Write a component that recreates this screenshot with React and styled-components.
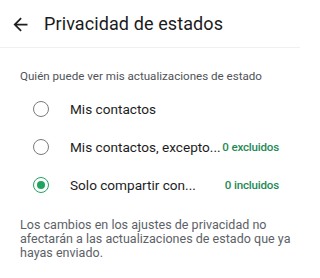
import React, { useState } from 'react';
import styled, { createGlobalStyle } from 'styled-components';

const GlobalStyle = createGlobalStyle`
  html, body {
    margin: 0;
    padding: 0;
    background: #ffffff;
  }
  body {
    font-family: Roboto, "Noto Sans", "Liberation Sans", sans-serif;
    -webkit-font-smoothing: antialiased;
  }
`;

const Screen = styled.div`
  width: 300px;
  height: 278px;
  background: #fff;
  overflow: hidden;
`;

const Header = styled.header`
  display: flex;
  align-items: center;
  height: 48px;
  padding: 0 0 0 10px;
  border-bottom: 1px solid #f0f0f0;
  box-sizing: border-box;
`;

const BackButton = styled.button`
  display: flex;
  align-items: center;
  justify-content: center;
  width: 21px;
  height: 21px;
  padding: 0;
  margin: 2px 13px 0 0;
  border: none;
  background: none;
  color: #1f1f1f;
  cursor: pointer;
`;

const Title = styled.h1`
  margin: 0;
  font-size: 18px;
  font-weight: 400;
  color: #1b1b1b;
  letter-spacing: 0.1px;
`;

const SectionLabel = styled.div`
  padding: 20px 20px 0;
  font-size: 11.6px;
  color: #4f5358;
  line-height: 16px;
`;

const Options = styled.div`
  display: flex;
  flex-direction: column;
  padding-top: 6px;
`;

const Row = styled.label`
  display: flex;
  align-items: center;
  height: 38px;
  padding: 0 21px 0 33px;
  cursor: pointer;
`;

const Radio = styled.span`
  position: relative;
  width: 16px;
  height: 16px;
  box-sizing: border-box;
  border-radius: 50%;
  border: 1.7px solid ${p => (p.$checked ? '#1fa45f' : '#7a7a7a')};
  margin-right: 21px;
  flex-shrink: 0;

  &::after {
    content: '';
    display: ${p => (p.$checked ? 'block' : 'none')};
    position: absolute;
    top: 50%;
    left: 50%;
    width: 8px;
    height: 8px;
    border-radius: 50%;
    background: #1fa45f;
    transform: translate(-50%, -50%);
  }
`;

const OptionText = styled.span`
  flex: 1;
  font-size: 13.6px;
  color: #1d1d1d;
  white-space: nowrap;
`;

const Count = styled.span`
  font-size: 11.6px;
  font-weight: 500;
  letter-spacing: -0.2px;
  color: #1f8a57;
  white-space: nowrap;
`;

const Note = styled.p`
  margin: 14px 0 0;
  padding: 0 0 0 20px;
  font-size: 12.5px;
  letter-spacing: 0.02px;
  line-height: 14px;
  color: #5c6166;
`;

const NoteLine = styled.span`
  display: block;
  white-space: nowrap;
`;

const options = [
  { id: 'contacts', label: 'Mis contactos' },
  { id: 'except', label: 'Mis contactos, excepto...', count: '0 excluidos' },
  { id: 'only', label: 'Solo compartir con...', count: '0 incluidos' },
];

const noteLines = [
  'Los cambios en los ajustes de privacidad no',
  'afectarán a las actualizaciones de estado que ya',
  'hayas enviado.',
];

const App = () => {
  const [selected, setSelected] = useState('only');

  return (
    <>
      <GlobalStyle />
      <Screen>
        <Header>
          <BackButton aria-label='Atrás'>
            <svg width='21' height='21' viewBox='0 0 24 24' fill='currentColor'>
              <path d='M20 11H7.83l5.59-5.59L12 4l-8 8 8 8 1.41-1.41L7.83 13H20v-2z' />
            </svg>
          </BackButton>
          <Title>Privacidad de estados</Title>
        </Header>

        <SectionLabel>Quién puede ver mis actualizaciones de estado</SectionLabel>

        <Options>
          {options.map(opt => (
            <Row key={opt.id} onClick={() => setSelected(opt.id)}>
              <Radio $checked={selected === opt.id} />
              <OptionText>{opt.label}</OptionText>
              {opt.count && <Count>{opt.count}</Count>}
            </Row>
          ))}
        </Options>

        <Note>
          {noteLines.map(line => (
            <NoteLine key={line}>{line}</NoteLine>
          ))}
        </Note>
      </Screen>
    </>
  );
};

export default App;
